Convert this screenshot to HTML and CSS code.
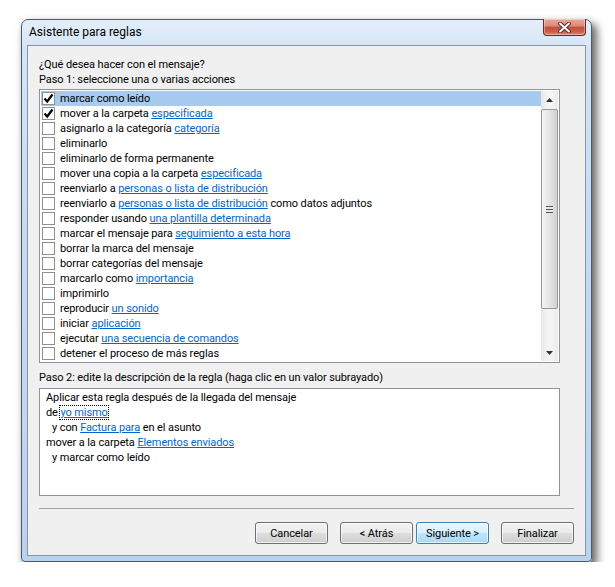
FILE: index.html
```html
<!DOCTYPE html>
<html lang="es">
<head>
  <meta charset="UTF-8" />
  <meta name="viewport" content="width=device-width, initial-scale=1.0" />
  <title>Asistente para reglas</title>
  <link rel="stylesheet" href="styles.css">
</head>
<body>
  <div class="window">
    <div class="titlebar">
      <span class="title">Asistente para reglas</span>
      <button class="close" aria-label="Cerrar">
        <svg width="15" height="11" viewBox="0 0 15 11">
          <path d="M3 1.5 L12 9.5 M12 1.5 L3 9.5" stroke="#5a2a24" stroke-width="4" stroke-linecap="round" fill="none"/>
          <path d="M3 1.5 L12 9.5 M12 1.5 L3 9.5" stroke="#fff" stroke-width="2" stroke-linecap="round" fill="none"/>
        </svg>
      </button>
    </div>

    <div class="client">
      <p class="text">¿Qué desea hacer con el mensaje?</p>
      <p class="text">Paso 1: seleccione una o varias acciones</p>

      <div class="listbox">
        <ul class="actions">
          <li class="selected"><span class="check"><svg width="11" height="11" viewBox="0 0 11 11"><path d="M1.5 5.5 L4.2 8.5 L9.5 1.5" stroke="#000" stroke-width="2.2" fill="none"/></svg></span>marcar como leído</li>
          <li><span class="check"><svg width="11" height="11" viewBox="0 0 11 11"><path d="M1.5 5.5 L4.2 8.5 L9.5 1.5" stroke="#000" stroke-width="2.2" fill="none"/></svg></span>mover a la carpeta&nbsp;<a href="#">especificada</a></li>
          <li><span class="check"></span>asignarlo a la categoría&nbsp;<a href="#">categoría</a></li>
          <li><span class="check"></span>eliminarlo</li>
          <li><span class="check"></span>eliminarlo de forma permanente</li>
          <li><span class="check"></span>mover una copia a la carpeta&nbsp;<a href="#">especificada</a></li>
          <li><span class="check"></span>reenviarlo a&nbsp;<a href="#">personas o lista de distribución</a></li>
          <li><span class="check"></span>reenviarlo a&nbsp;<a href="#">personas o lista de distribución</a>&nbsp;como datos adjuntos</li>
          <li><span class="check"></span>responder usando&nbsp;<a href="#">una plantilla determinada</a></li>
          <li><span class="check"></span>marcar el mensaje para&nbsp;<a href="#">seguimiento a esta hora</a></li>
          <li><span class="check"></span>borrar la marca del mensaje</li>
          <li><span class="check"></span>borrar categorías del mensaje</li>
          <li><span class="check"></span>marcarlo como&nbsp;<a href="#">importancia</a></li>
          <li><span class="check"></span>imprimirlo</li>
          <li><span class="check"></span>reproducir&nbsp;<a href="#">un sonido</a></li>
          <li><span class="check"></span>iniciar&nbsp;<a href="#">aplicación</a></li>
          <li><span class="check"></span>ejecutar&nbsp;<a href="#">una secuencia de comandos</a></li>
          <li><span class="check"></span>detener el proceso de más reglas</li>
        </ul>
        <div class="scrollbar">
          <div class="arrow"><svg width="7" height="4" viewBox="0 0 7 4"><path d="M0 4 L3.5 0 L7 4 Z" fill="#333"/></svg></div>
          <div class="thumb">
            <span class="grip"></span>
          </div>
          <div class="track"></div>
          <div class="arrow"><svg width="7" height="4" viewBox="0 0 7 4"><path d="M0 0 L3.5 4 L7 0 Z" fill="#333"/></svg></div>
        </div>
      </div>

      <p class="text step2">Paso 2: edite la descripción de la regla (haga clic en un valor subrayado)</p>
      <div class="description">
        <div>Aplicar esta regla después de la llegada del mensaje</div>
        <div>de <a href="#" class="focused">yo mismo</a></div>
        <div class="indent">y con <a href="#">Factura para</a> en el asunto</div>
        <div>mover a la carpeta <a href="#">Elementos enviados</a></div>
        <div class="indent">y marcar como leído</div>
      </div>

      <hr class="separator">

      <div class="buttons">
        <button class="btn">Cancelar</button>
        <div class="nav">
          <button class="btn">&lt; Atrás</button>
          <button class="btn default">Siguiente &gt;</button>
        </div>
        <button class="btn">Finalizar</button>
      </div>
    </div>
  </div>
</body>
</html>
```

FILE: styles.css
```css
:root {
  --link: #0066cc;
  --face: #f0f0f0;
  --box-border: #8f949c;
}

body {
  margin: 0;
  background: #fff;
  font-family: Roboto, "Noto Sans", sans-serif;
  font-size: 11px;
  letter-spacing: -0.1px;
  color: #000;
}

.window {
  margin: 19px 0 0 21px;
  width: 571px;
  height: 543px;
  box-sizing: border-box;
  border: 1px solid #4f5a68;
  border-radius: 7px 7px 4px 4px;
  background: linear-gradient(180deg, #e4eef9 0%, #d3e4f6 6%, #c5dbf2 40%, #b9d3ef 100%);
  box-shadow: 4px 5px 9px 1px rgba(0, 0, 0, 0.6);
  padding: 0 5px 5px;
  display: flex;
  flex-direction: column;
}

.titlebar {
  height: 25px;
  display: flex;
  justify-content: space-between;
  align-items: flex-start;
}

.title {
  margin: 5px 0 0 2px;
  line-height: 15px;
  font-size: 12px;
  letter-spacing: 0;
}

.close {
  width: 43px;
  height: 17px;
  margin: -1px 0 0;
  padding: 0;
  border: 1px solid #6b2a22;
  border-top: none;
  border-radius: 0 0 4px 4px;
  background: linear-gradient(180deg, #e9a99a 0%, #d98a76 45%, #c2503c 50%, #cc5e48 80%, #e08a70 100%);
  display: flex;
  align-items: center;
  justify-content: center;
  box-shadow: inset 0 0 0 1px rgba(255, 255, 255, 0.35);
}

.client {
  flex: 1;
  background: var(--face);
  border: 1px solid #8895a4;
  padding: 11px 10px 0 11px;
}

.text {
  margin: 0;
  line-height: 15px;
}

.listbox {
  margin-top: 2px;
  width: 521px;
  height: 274px;
  box-sizing: border-box;
  border: 1px solid var(--box-border);
  background: #fff;
  padding: 1px;
  display: flex;
}

.actions {
  list-style: none;
  margin: 0;
  padding: 0;
  flex: 1;
}

.actions li {
  height: 15px;
  line-height: 15px;
  display: flex;
  align-items: center;
  white-space: nowrap;
}

.actions li.selected {
  background: #a6caf0;
}

.check {
  width: 11px;
  height: 11px;
  border: 1px solid #8e8f8f;
  background: #fff;
  margin: 0 5px 0 1px;
  flex: none;
  display: flex;
}

a {
  color: var(--link);
}

.scrollbar {
  width: 17px;
  display: flex;
  flex-direction: column;
  background: linear-gradient(90deg, #e8e8e8, #f4f4f4 40%, #f4f4f4 70%, #e9e9e9);
}

.arrow {
  height: 17px;
  display: flex;
  align-items: center;
  justify-content: center;
  flex: none;
}

.thumb {
  height: 200px;
  margin: 1px 0 0;
  box-sizing: border-box;
  border: 1px solid #979797;
  border-radius: 2px;
  background: linear-gradient(90deg, #f4f4f4 0%, #e6e6e6 45%, #d2d2d2 100%);
  display: flex;
  align-items: center;
  justify-content: center;
}

.grip {
  width: 7px;
  height: 7px;
  background: repeating-linear-gradient(180deg, #555 0 1px, #e8e8e8 1px 3px);
}

.track {
  flex: 1;
}

.step2 {
  margin-top: 7px;
}

.description {
  margin-top: 3px;
  width: 521px;
  height: 108px;
  box-sizing: border-box;
  border: 1px solid var(--box-border);
  background: #fff;
  padding: 1px 6px;
  line-height: 15px;
}

.indent {
  padding-left: 6px;
}

.focused {
  outline: 1px dotted #000;
  outline-offset: 0;
}

.separator {
  margin: 12px 0 0;
  border: none;
  border-top: 1px solid #a0a0a0;
  width: 535px;
}

.buttons {
  margin-top: 13px;
  width: 535px;
  display: flex;
  justify-content: flex-end;
  gap: 12px;
}

.nav {
  display: flex;
  gap: 3px;
}

.btn {
  width: 73px;
  height: 22px;
  padding: 0;
  font: inherit;
  letter-spacing: inherit;
  color: #000;
  border: 1px solid #707070;
  border-radius: 3px;
  background: linear-gradient(180deg, #f2f2f2 0%, #ebebeb 50%, #dddddd 51%, #cfcfcf 100%);
  box-shadow: inset 0 0 0 1px rgba(255, 255, 255, 0.7);
}

.btn.default {
  border-color: #3c7fb1;
  background: linear-gradient(180deg, #eaf6fd 0%, #d9f0fc 50%, #bee6fd 51%, #a7d9f5 100%);
}
```
